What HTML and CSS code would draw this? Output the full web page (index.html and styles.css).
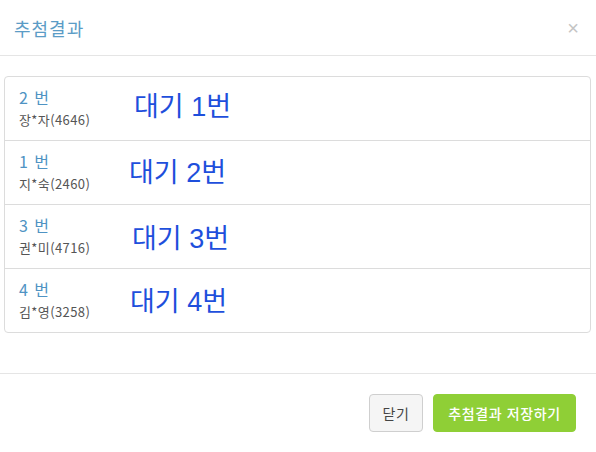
FILE: index.html
```html
<!DOCTYPE html>
<html lang="ko">
<head>
<meta charset="utf-8">
<link rel="stylesheet" href="styles.css">
</head>
<body>
<div class="modal">
  <div class="modal-header">
    <h4 class="modal-title">추첨결과</h4>
    <span class="close">×</span>
  </div>
  <div class="modal-body">
    <ul class="list">
      <li class="item">
        <div class="info"><div class="num">2 번</div><div class="name">장*자(4646)</div></div>
        <div class="wait w1">대기 1번</div>
      </li>
      <li class="item">
        <div class="info"><div class="num">1 번</div><div class="name">지*숙(2460)</div></div>
        <div class="wait w2">대기 2번</div>
      </li>
      <li class="item">
        <div class="info"><div class="num">3 번</div><div class="name">권*미(4716)</div></div>
        <div class="wait w3">대기 3번</div>
      </li>
      <li class="item">
        <div class="info"><div class="num">4 번</div><div class="name">김*영(3258)</div></div>
        <div class="wait w4">대기 4번</div>
      </li>
    </ul>
  </div>
  <div class="modal-footer">
    <button class="btn btn-default">닫기</button>
    <button class="btn btn-success">추첨결과 저장하기</button>
  </div>
</div>
</body>
</html>
```
FILE: styles.css
```css
* { box-sizing: border-box; }
html, body { margin: 0; padding: 0; background: #fff; }
body { font-family: "Noto Sans CJK KR", "Noto Sans", sans-serif; color: #333; width: 596px; height: 452px; overflow: hidden; }
.modal { width: 596px; }
.modal-header {
  height: 56px;
  border-bottom: 1px solid #e5e5e5;
  display: flex;
  align-items: center;
  justify-content: space-between;
  padding: 0 17px 0 14px;
}
.modal-title { margin: 0; font-size: 18px; font-weight: 400; color: #5b9cc6; line-height: 1; letter-spacing: 1px; }
.close { color: #c4c4c4; font-size: 20px; font-family: "Liberation Sans", sans-serif; line-height: 1; }
.modal-body { padding: 20px 5px 40px 4px; height: 317px; }
.list { list-style: none; margin: 0; padding: 0; border: 1px solid #dcdcdc; border-radius: 4px; }
.item {
  height: 64px;
  border-top: 1px solid #dcdcdc;
  display: flex;
  align-items: flex-start;
  padding-left: 14px;
}
.item:first-child { border-top: none; height: 63px; }
.info { width: 110px; padding-top: 9px; }
.num { font-size: 16px; color: #4f93c3; line-height: 22px; letter-spacing: 1px; }
.name { font-size: 13px; color: #555; line-height: 18px; margin-top: 3px; letter-spacing: 0.4px; }
.wait { font-size: 27px; color: #1e4fdc; font-family: "Liberation Sans", "Noto Sans CJK KR", sans-serif; font-weight: 400; line-height: 30px; }
.w1 { margin-left: 5px; margin-top: 15px; }
.w2 { margin-left: 0; margin-top: 17px; }
.w3 { margin-left: 3px; margin-top: 19px; }
.w4 { margin-left: 1px; margin-top: 18px; }
.modal-footer {
  border-top: 1px solid #e5e5e5;
  padding: 20px 20px 20px;
  display: flex;
  justify-content: flex-end;
  gap: 10px;
}
.btn {
  height: 38px;
  border-radius: 4px;
  font-family: "Noto Sans CJK KR", sans-serif;
  font-size: 14px;
  padding: 0;
  cursor: pointer;
  letter-spacing: 0.6px;
}
.btn-default { background: #f5f5f5; border: 1px solid #cfcfcf; color: #444; width: 54px; }
.btn-success { background: #8fcf36; border: 1px solid #8fcf36; color: #fff; width: 143px; font-weight: 500; }
```
